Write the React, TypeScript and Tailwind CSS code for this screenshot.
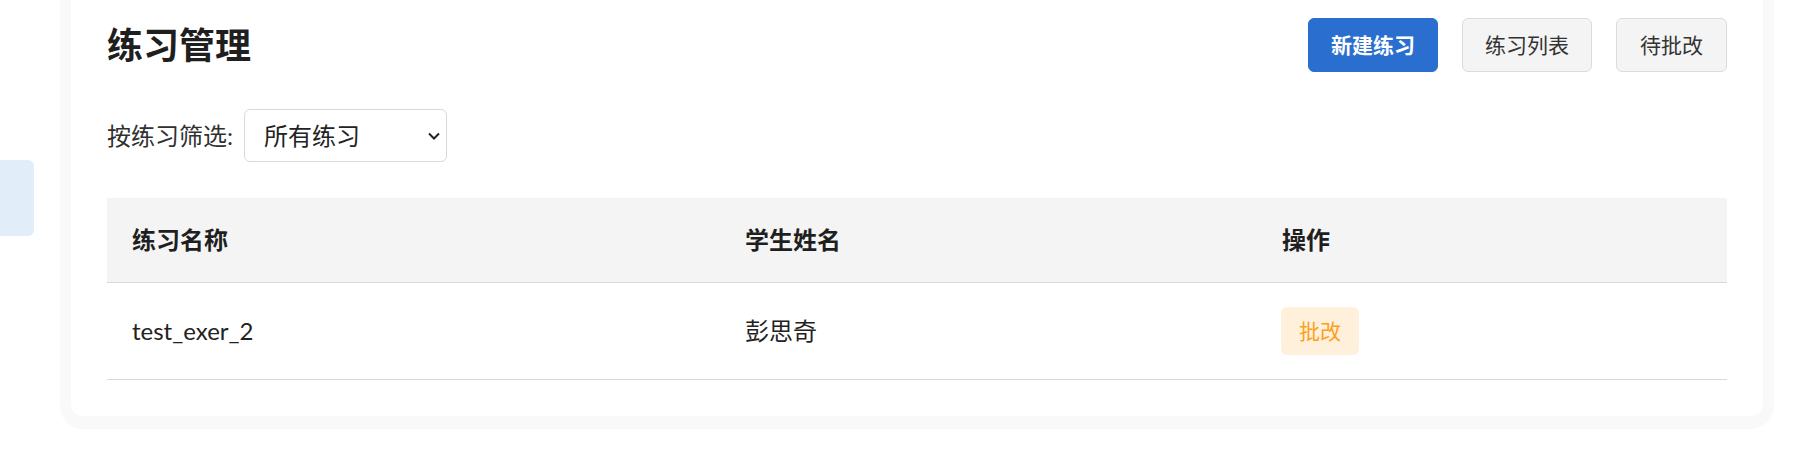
import { useState } from "react";

const rows = [{ id: 1, exercise: "test_exer_2", student: "彭思奇" }];

export default function App() {
  const [filter, setFilter] = useState("all");

  return (
    <div className="w-full h-[466px] overflow-hidden bg-white flex font-['Lato','Noto_Sans_CJK_SC',sans-serif] text-[#262626]">
      {/* sidebar, only the active item edge is visible */}
      <aside className="w-[34px] shrink-0">
        <div className="mt-[160px] h-[76px] w-[34px] rounded-r-[6px] bg-[#e1eefa]" />
      </aside>

      <main className="flex-1 pl-[37px] pr-[37px]">
        <div className="-mt-[18px] bg-white rounded-[12px] p-[36px] shadow-[0_2px_0_11px_#f9f9f9]">
          <div className="flex items-center justify-between h-[54px]">
            <h1 className="text-[36px] font-bold leading-none text-[#1f1f1f]">练习管理</h1>
            <div className="flex gap-[24px]">
              <button className="h-[54px] px-[22px] rounded-[6px] bg-[#2a6fcf] border border-[#2a6fcf] text-white text-[21px] font-bold">
                新建练习
              </button>
              <button className="h-[54px] px-[22px] rounded-[6px] bg-[#f4f4f4] border border-[#dcdcdc] text-[#333] text-[21px]">
                练习列表
              </button>
              <button className="h-[54px] px-[23px] rounded-[6px] bg-[#f4f4f4] border border-[#dcdcdc] text-[#333] text-[21px]">
                待批改
              </button>
            </div>
          </div>

          <div className="mt-[37px] flex items-center">
            <label className="text-[24px] text-[#303030]">按练习筛选:</label>
            <div className="relative ml-[11px]">
              <select
                value={filter}
                onChange={(e) => setFilter(e.target.value)}
                className="appearance-none h-[53px] w-[203px] pl-[19px] pr-[40px] rounded-[6px] border border-[#d9d9d9] bg-white text-[24px] text-[#222] outline-none"
              >
                <option value="all">所有练习</option>
                <option value="test_exer_2">test_exer_2</option>
              </select>
              <svg
                className="absolute right-[6px] top-1/2 -translate-y-1/2 pointer-events-none"
                width="14"
                height="9"
                viewBox="0 0 14 9"
              >
                <polyline points="2,2 7,7 12,2" fill="none" stroke="#222" strokeWidth="2" />
              </svg>
            </div>
          </div>

          <div className="mt-[36px]">
            <div className="grid grid-cols-[614px_537px_1fr] bg-[#f4f4f4] border-b border-[#d9d9d9] text-[24px] font-bold text-[#1f1f1f]">
              <div className="px-[25px] h-[84px] flex items-center">练习名称</div>
              <div className="px-[24px] h-[84px] flex items-center">学生姓名</div>
              <div className="px-[24px] h-[84px] flex items-center">操作</div>
            </div>
            {rows.map((r) => (
              <div
                key={r.id}
                className="grid grid-cols-[614px_537px_1fr] border-b border-[#d9d9d9] text-[24px] text-[#222]"
              >
                <div className="px-[25px] h-[96px] flex items-center">{r.exercise}</div>
                <div className="px-[24px] h-[96px] flex items-center">{r.student}</div>
                <div className="px-[23px] h-[96px] flex items-center">
                  <button className="h-[48px] px-[18px] rounded-[6px] bg-[#fff0dc] text-[#f9a11b] text-[21px]">
                    批改
                  </button>
                </div>
              </div>
            ))}
          </div>
        </div>
      </main>
    </div>
  );
}
